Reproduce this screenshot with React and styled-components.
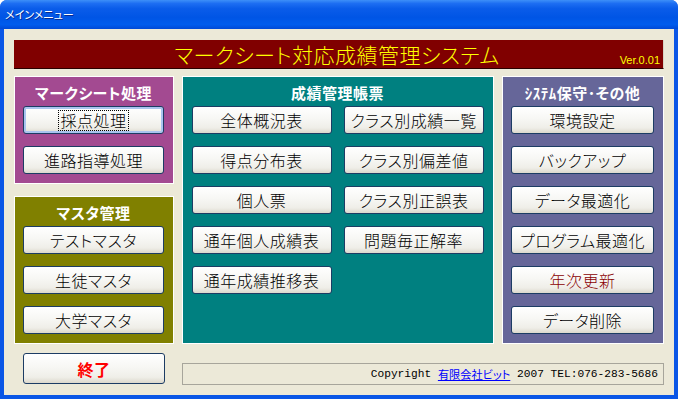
import React from 'react'
import styled, { createGlobalStyle } from 'styled-components'

const marksheetItems = [
    { label: '採点処理', focused: true },
    { label: '進路指導処理' },
]

const masterItems = [
    { label: 'テストマスタ' },
    { label: '生徒マスタ' },
    { label: '大学マスタ' },
]

const reportItems = [
    { label: '全体概況表' },
    { label: 'クラス別成績一覧' },
    { label: '得点分布表' },
    { label: 'クラス別偏差値' },
    { label: '個人票' },
    { label: 'クラス別正誤表' },
    { label: '通年個人成績表' },
    { label: '問題毎正解率' },
    { label: '通年成績推移表' },
]

const systemItems = [
    { label: '環境設定' },
    { label: 'バックアップ' },
    { label: 'データ最適化' },
    { label: 'プログラム最適化' },
    { label: '年次更新', tone: 'warn' },
    { label: 'データ削除' },
]

function MenuButtons({ items }) {
    return items.map((item) => (
        <MenuButton key={item.label} $tone={item.tone} $focused={item.focused}>
            {item.focused ? <FocusRing>{item.label}</FocusRing> : item.label}
        </MenuButton>
    ))
}

export default function App() {
    return (
        <>
            <GlobalStyle />
            <Window>
                <TitleBar>メインメニュー</TitleBar>
                <Client>
                    <Header>
                        <span />
                        <HeaderTitle>マークシート対応成績管理システム</HeaderTitle>
                        <Version>Ver.0.01</Version>
                    </Header>

                    <MainRow>
                        <LeftColumn>
                            <Panel $bg="#a34a91" $height={108}>
                                <PanelTitle>マークシート処理</PanelTitle>
                                <ButtonStack>
                                    <MenuButtons items={marksheetItems} />
                                </ButtonStack>
                            </Panel>
                            <Panel $bg="#808000" $height={148}>
                                <PanelTitle>マスタ管理</PanelTitle>
                                <ButtonStack>
                                    <MenuButtons items={masterItems} />
                                </ButtonStack>
                            </Panel>
                        </LeftColumn>

                        <Panel $bg="#008080" $height={268}>
                            <PanelTitle>成績管理帳票</PanelTitle>
                            <ButtonGrid>
                                <MenuButtons items={reportItems} />
                            </ButtonGrid>
                        </Panel>

                        <Panel $bg="#666699" $height={268}>
                            <PanelTitle>ｼｽﾃﾑ保守･その他</PanelTitle>
                            <ButtonStack>
                                <MenuButtons items={systemItems} />
                            </ButtonStack>
                        </Panel>
                    </MainRow>

                    <Footer>
                        <ExitCell>
                            <ExitButton>終了</ExitButton>
                        </ExitCell>
                        <Copyright>
                            Copyright <a href="#bit">有限会社ビット</a> 2007 TEL:076-283-5686
                        </Copyright>
                    </Footer>
                </Client>
            </Window>
        </>
    )
}

const GlobalStyle = createGlobalStyle`
* { box-sizing: border-box; }
html, body {
    margin: 0;
    padding: 0;
    background: #ffffff;
}
body {
    font-family: "Noto Sans CJK JP", "Noto Sans", sans-serif;
    font-feature-settings: "palt";
}
`

const Window = styled.div`
width: 678px;
height: 399px;
display: flex;
flex-direction: column;
background: #0a56e6;
border-radius: 7px 7px 0 0;
overflow: hidden;
`

const TitleBar = styled.div`
height: 29px;
flex: none;
display: flex;
align-items: center;
padding: 0 0 2px 5px;
color: #ffffff;
font-size: 11px;
font-weight: normal;
text-shadow: 1px 1px 0 #0a2a8c;
background: linear-gradient(
    180deg,
    #3d8ff8 0%,
    #1d6ef2 12%,
    #0a5ce9 30%,
    #0055e5 60%,
    #005ced 85%,
    #0049d6 100%
);
`

const Client = styled.div`
flex: 1;
margin: 0 4px 4px;
padding: 11px 10px 0;
background: #ece9d8;
display: flex;
flex-direction: column;
`

const Header = styled.div`
height: 29px;
display: grid;
grid-template-columns: 1fr auto 1fr;
align-items: center;
padding: 0 3px 0 0;
background: #800000;
border-bottom: 1px solid #2a0000;
border-right: 1px solid #d8d4c4;
`

const HeaderTitle = styled.div`
color: #ffff00;
font-size: 21px;
font-weight: 300;
line-height: 28px;
letter-spacing: 0.5px;
`

const Version = styled.div`
justify-self: end;
align-self: end;
color: #ffff00;
font-family: "Liberation Sans", sans-serif;
font-size: 11px;
line-height: 14px;
padding-bottom: 1px;
`

const MainRow = styled.div`
margin-top: 7px;
display: grid;
grid-template-columns: 160px 312px 162px;
column-gap: 8px;
`

const LeftColumn = styled.div`
display: flex;
flex-direction: column;
gap: 12px;
`

const Panel = styled.div`
height: ${(p) => p.$height}px;
background: ${(p) => p.$bg};
border: 1px solid #ffffff;
padding: 5px 9px 0 8px;
display: flex;
flex-direction: column;
`

const PanelTitle = styled.div`
height: 22px;
line-height: 22px;
margin-bottom: 2px;
text-align: center;
color: #ffffff;
font-size: 15px;
font-weight: bold;
letter-spacing: 0.5px;
`

const ButtonStack = styled.div`
display: flex;
flex-direction: column;
gap: 12px;
`

const ButtonGrid = styled.div`
display: grid;
grid-template-columns: 140px 140px;
column-gap: 12px;
row-gap: 12px;
justify-content: center;
`

const MenuButton = styled.button`
height: 28px;
width: 100%;
padding: 0;
display: flex;
align-items: center;
justify-content: center;
border: 1px solid #1c3c64;
border-radius: 3px;
background: linear-gradient(180deg, #ffffff 0%, #f7f7f4 45%, #efeee8 80%, #dcd8cc 100%);
box-shadow: ${(p) => (p.$focused ? 'inset 0 0 0 2px #a9c4ef' : 'none')};
color: ${(p) => (p.$tone === 'warn' ? '#8a0000' : '#000000')};
font-family: "Noto Sans CJK JP", sans-serif;
font-feature-settings: "palt";
font-size: 16px;
font-weight: 300;
letter-spacing: 0.5px;
cursor: pointer;
`

const FocusRing = styled.span`
outline: 1px dotted #000000;
padding: 0 1px;
line-height: 19px;
`

const Footer = styled.div`
margin-top: 9px;
display: grid;
grid-template-columns: 160px 1fr;
column-gap: 8px;
align-items: end;
`

const ExitCell = styled.div`
padding: 0 9px;
`

const ExitButton = styled(MenuButton)`
height: 31px;
color: #ff0000;
font-weight: bold;
font-size: 16px;
`

const Copyright = styled.div`
height: 22px;
margin-bottom: -1px;
border: 1px solid #a7a59b;
padding: 0 5px;
display: flex;
align-items: center;
justify-content: flex-end;
white-space: pre;
color: #000000;
font-family: "Liberation Mono", "Noto Sans CJK JP", monospace;
font-size: 11.2px;
a {
    color: #0000ff;
    text-decoration: underline;
    font-family: "Noto Sans CJK JP", sans-serif;
}
`
